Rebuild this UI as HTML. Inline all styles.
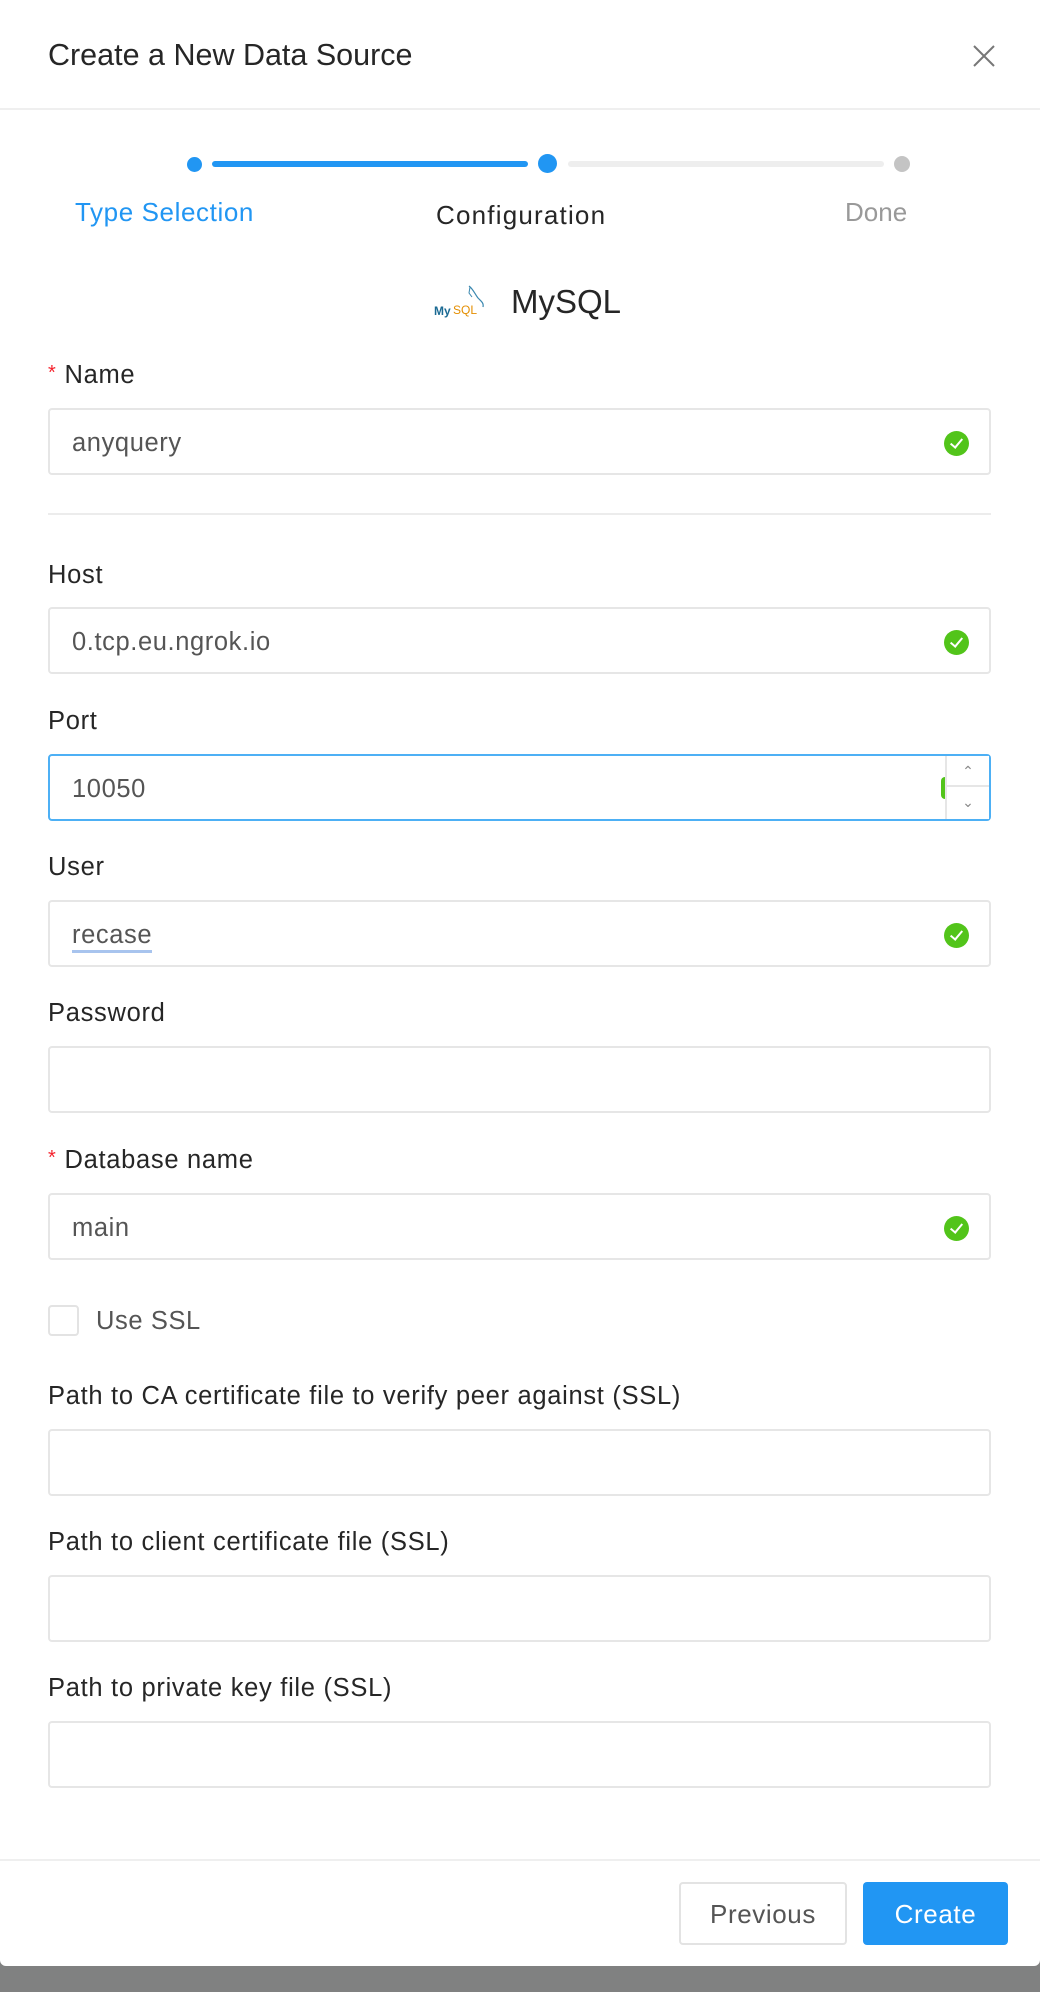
<!DOCTYPE html>
<html><head><meta charset="utf-8"><style>
*{box-sizing:border-box;margin:0;padding:0}
body{width:1040px;height:1992px;background:#808181;font-family:"Liberation Sans",Arial,sans-serif;position:relative;overflow:hidden}
.modal{position:absolute;left:0;top:0;width:1040px;height:1966px;background:#fff;border-radius:0 0 6px 6px}
.a{position:absolute;white-space:nowrap}
.lbl{position:absolute;left:48px;font-size:25.5px;color:#262626;letter-spacing:0.7px}
.inp{position:absolute;left:48px;width:943px;height:67px;border:2px solid #e6e6e6;border-radius:4px;background:#fff}
.inp span{position:absolute;left:22px;top:19px;font-size:25.5px;color:#555;letter-spacing:0.6px}
.ok{position:absolute;right:20px;top:21px;width:25px;height:25px;border-radius:50%;background:#52c41a}
.ok:after{content:"";position:absolute;left:9px;top:5px;width:5px;height:10px;border:solid #fff;border-width:0 2px 2px 0;transform:rotate(40deg)}
.req{color:#f5222d;font-size:20px;margin-right:8px;position:relative;top:-4px}
</style></head><body>
<div class="modal">
<div class="a" style="left:48px;top:38px;font-size:30.5px;color:#262626">Create a New Data Source</div>
<svg class="a" style="left:972px;top:44px" width="24" height="24" viewBox="0 0 24 24"><path d="M2 2L22 22M22 2L2 22" stroke="#777" stroke-width="2"/></svg>
<div class="a" style="left:0;top:108px;width:1040px;height:2px;background:#efefef"></div>

<div class="a" style="left:187px;top:157px;width:15px;height:15px;border-radius:50%;background:#2196f3"></div>
<div class="a" style="left:212px;top:161px;width:316px;height:6px;background:#2196f3;border-radius:3px"></div>
<div class="a" style="left:538px;top:154px;width:19px;height:19px;border-radius:50%;background:#2196f3"></div>
<div class="a" style="left:568px;top:161px;width:316px;height:6px;background:#eeeeee;border-radius:3px"></div>
<div class="a" style="left:894px;top:156px;width:16px;height:16px;border-radius:50%;background:#c4c4c4"></div>
<div class="a" style="left:75px;top:197px;font-size:26px;color:#2196f3;letter-spacing:0.6px">Type Selection</div>
<div class="a" style="left:436px;top:200px;font-size:26px;color:#262626;letter-spacing:1.2px">Configuration</div>
<div class="a" style="left:845px;top:197px;font-size:26px;color:#999">Done</div>

<svg class="a" style="left:433px;top:284px" width="60" height="34" viewBox="0 0 60 34">
<path d="M36 2c4 3 6 8 9 12 3 3 6 5 5 9" stroke="#3b88b0" stroke-width="1.2" fill="none"/>
<path d="M37 3l-1 6 3 4" stroke="#3b88b0" stroke-width="1" fill="none"/>
<text x="1" y="31" font-family="Liberation Sans" font-size="12" font-weight="bold" fill="#1b6a93">My</text>
<text x="20" y="30" font-family="Liberation Sans" font-size="12" fill="#e48e00">SQL</text>
</svg>
<div class="a" style="left:511px;top:283px;font-size:33px;color:#262626">MySQL</div>

<div class="lbl" style="top:361px"><span class="req">*</span>Name</div>
<div class="inp" style="top:408px"><span>anyquery</span><i class="ok"></i></div>
<div class="a" style="left:48px;top:513px;width:943px;height:2px;background:#ececec"></div>

<div class="lbl" style="top:561px">Host</div>
<div class="inp" style="top:607px"><span>0.tcp.eu.ngrok.io</span><i class="ok"></i></div>

<div class="lbl" style="top:707px">Port</div>
<div class="inp" style="top:754px;border-color:#4db0f5"><span>10050</span>
<div class="a" style="right:0;top:0;width:44px;height:63px;border-left:2px solid #e6e6e6;background:#fff">
<div style="height:31px;border-bottom:2px solid #e6e6e6;text-align:center;color:#888;font-size:14px;line-height:31px">&#8963;</div>
<div style="text-align:center;color:#888;font-size:14px;line-height:30px">&#8964;</div></div>
<div class="a" style="right:44px;top:21px;width:4px;height:22px;background:#52c41a;border-radius:4px 0 0 4px"></div>
</div>

<div class="lbl" style="top:853px">User</div>
<div class="inp" style="top:900px"><span style="border-bottom:3px solid #a8c4ee;padding-bottom:0">recase</span><i class="ok"></i></div>

<div class="lbl" style="top:999px">Password</div>
<div class="inp" style="top:1046px"></div>

<div class="lbl" style="top:1146px"><span class="req">*</span>Database name</div>
<div class="inp" style="top:1193px"><span>main</span><i class="ok"></i></div>

<div class="a" style="left:48px;top:1305px;width:31px;height:31px;border:2px solid #e3e3e3;border-radius:4px"></div>
<div class="a" style="left:96px;top:1307px;font-size:25.5px;color:#555;letter-spacing:0.6px">Use SSL</div>

<div class="lbl" style="top:1382px">Path to CA certificate file to verify peer against (SSL)</div>
<div class="inp" style="top:1429px"></div>
<div class="lbl" style="top:1528px">Path to client certificate file (SSL)</div>
<div class="inp" style="top:1575px"></div>
<div class="lbl" style="top:1674px">Path to private key file (SSL)</div>
<div class="inp" style="top:1721px"></div>

<div class="a" style="left:0;top:1859px;width:1040px;height:2px;background:#efefef"></div>
<div class="a" style="left:679px;top:1882px;width:168px;height:63px;border:2px solid #e3e3e3;border-radius:4px;font-size:26px;color:#555;text-align:center;line-height:61px;letter-spacing:0.6px">Previous</div>
<div class="a" style="left:863px;top:1882px;width:145px;height:63px;background:#2196f3;border-radius:4px;font-size:26px;color:#fff;text-align:center;line-height:64px;letter-spacing:0.6px">Create</div>
</div>
</body></html>
